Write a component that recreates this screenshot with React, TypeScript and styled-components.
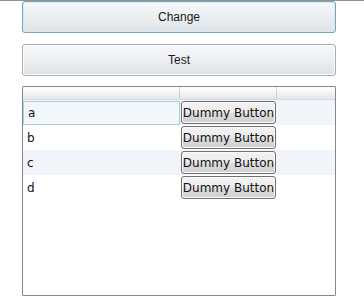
import React from 'react';
import styled, { createGlobalStyle } from 'styled-components';

const GlobalStyle = createGlobalStyle`
  body {
    margin: 0;
    background: #ffffff;
    font-family: 'DejaVu Sans', 'Liberation Sans', sans-serif;
  }
`;

const Window = styled.div`
  width: 364px;
  height: 302px;
  box-sizing: border-box;
  border-top: 1px solid #8c9296;
  padding: 0 28px 0 22px;
  display: flex;
  flex-direction: column;
`;

const BigButton = styled.button<{ $focused?: boolean }>`
  height: 32px;
  width: 100%;
  margin-top: ${(p) => (p.$focused ? '0' : '11px')};
  border-radius: 3px;
  border: 1px solid ${(p) => (p.$focused ? '#7fa3b3' : '#acacac')};
  box-shadow: ${(p) => (p.$focused ? 'inset 0 0 0 1px #d6ecf5' : 'inset 0 0 0 1px #fcfcfc')};
  background: linear-gradient(#f6f8fa 0%, #eceff2 50%, #dde1e5 100%);
  font-family: 'Liberation Sans', sans-serif;
  font-size: 12px;
  color: #1a1a1a;
  padding: 0;
`;

const Grid = styled.div`
  margin-top: 10px;
  height: 210px;
  border: 1px solid #828790;
  border-radius: 1px;
  box-sizing: border-box;
  display: flex;
  flex-direction: column;
`;

const HeaderRow = styled.div`
  display: grid;
  grid-template-columns: 157px 97px 1fr;
  height: 12px;
  background: linear-gradient(#ffffff 0%, #f2f4f6 50%, #e2e7ec 100%);
  border-bottom: 1px solid #d5dadf;
`;

const HeaderCell = styled.div`
  border-right: 1px solid #d0d4d8;
  &:last-child {
    border-right: none;
  }
`;

const Row = styled.div<{ $alt: boolean }>`
  display: grid;
  grid-template-columns: 157px 97px 1fr;
  height: 25px;
  background: ${(p) => (p.$alt ? '#f1f4f9' : '#ffffff')};
`;

const TextCell = styled.div<{ $selected?: boolean }>`
  display: flex;
  align-items: center;
  padding-left: 4px;
  font-size: 12px;
  color: #111;
  box-sizing: border-box;
  margin-top: ${(p) => (p.$selected ? '1px' : '0')};
  height: ${(p) => (p.$selected ? '24px' : '25px')};
  border: ${(p) => (p.$selected ? '1px solid #a9cfdc' : 'none')};
  background: ${(p) => (p.$selected ? '#f3f7fa' : 'transparent')};
`;

const ButtonCell = styled.div`
  display: flex;
  align-items: center;
  justify-content: flex-start;
  padding-left: 1px;
`;

const DummyButton = styled.button`
  height: 23px;
  width: 95px;
  border: 1px solid #707070;
  border-radius: 3px;
  background: linear-gradient(#f3f3f3 0%, #ebebeb 50%, #dddddd 51%, #cfcfcf 100%);
  box-shadow: inset 0 0 0 1px #fbfbfb;
  font-family: 'DejaVu Sans', sans-serif;
  font-size: 12px;
  color: #111;
  padding: 0;
  white-space: nowrap;
`;

const rows = ['a', 'b', 'c', 'd'];

const App: React.FC = () => {
  return (
    <>
      <GlobalStyle />
      <Window>
        <BigButton $focused>Change</BigButton>
        <BigButton>Test</BigButton>
        <Grid>
          <HeaderRow>
            <HeaderCell />
            <HeaderCell />
            <HeaderCell />
          </HeaderRow>
          {rows.map((r, i) => (
            <Row key={r} $alt={i % 2 === 0}>
              <TextCell $selected={i === 0}>{r}</TextCell>
              <ButtonCell>
                <DummyButton>Dummy Button</DummyButton>
              </ButtonCell>
              <div />
            </Row>
          ))}
        </Grid>
      </Window>
    </>
  );
};

export default App;
